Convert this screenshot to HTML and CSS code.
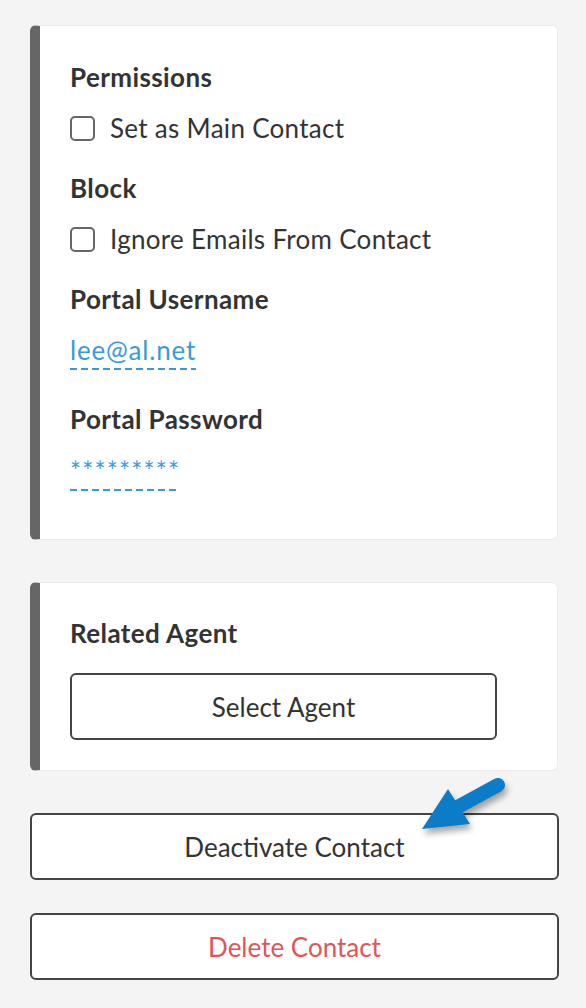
FILE: index.html
```html
<!DOCTYPE html>
<html>
<head>
<meta charset="utf-8">
<link rel="stylesheet" href="styles.css">
</head>
<body>
<div class="page">
  <section class="card card-main">
    <h3 class="label">Permissions</h3>
    <label class="check"><span class="box"></span><span>Set as Main Contact</span></label>
    <h3 class="label label-gap">Block</h3>
    <label class="check"><span class="box"></span><span>Ignore Emails From Contact</span></label>
    <h3 class="label label-gap">Portal Username</h3>
    <div class="field"><span class="editable">lee@al.net</span></div>
    <h3 class="label label-gap2">Portal Password</h3>
    <div class="field field-pw"><span class="editable">*********</span></div>
  </section>

  <section class="card card-agent">
    <h3 class="label">Related Agent</h3>
    <button class="btn btn-agent">Select Agent</button>
  </section>

  <div class="actions">
    <button class="btn btn-wide">Deactivate Contact</button>
    <svg class="pointer" width="100" height="72" viewBox="0 0 100 72">
      <g class="arrow-shape">
        <line x1="88" y1="14" x2="44" y2="38" stroke="#0b7cc7" stroke-width="14" stroke-linecap="round"/>
        <polygon points="12,58 38,18 60,53" fill="#0b7cc7"/>
      </g>
    </svg>
    <button class="btn btn-wide btn-danger">Delete Contact</button>
  </div>
</div>
</body>
</html>
```

FILE: styles.css
```css
html, body {
  margin: 0;
  padding: 0;
  background: #f4f4f4;
}
body {
  font-family: Lato, "Open Sans", sans-serif;
  color: #333;
  width: 586px;
  height: 1008px;
  overflow: hidden;
}
.page {
  padding: 25px 28px 0 30px;
}
.card {
  background: #fff;
  border: 1px solid #ebebeb;
  border-left: 10px solid #666;
  border-radius: 6px;
  padding: 0 30px;
}
.card-main {
  padding-top: 36px;
  padding-bottom: 48px;
}
.card-agent {
  margin-top: 42px;
  padding-top: 35px;
  padding-bottom: 30px;
}
.label {
  margin: 0;
  font-size: 26px;
  line-height: 30px;
  font-weight: 700;
  letter-spacing: 0.4px;
  color: #333;
}
.label-gap { margin-top: 30px; }
.label-gap2 { margin-top: 34px; }
.check {
  display: flex;
  align-items: center;
  gap: 15px;
  margin-top: 21px;
  font-size: 26px;
  line-height: 30px;
  letter-spacing: 0.3px;
}
.box {
  width: 21px;
  height: 21px;
  border: 2px solid #666;
  border-radius: 5px;
  flex: none;
}
.field {
  margin-top: 20px;
  font-size: 26px;
  line-height: 32px;
  color: #3a9ad9;
  letter-spacing: 0.8px;
}
.field-pw {
  margin-top: 21px;
  letter-spacing: 1.2px;
}
.editable {
  display: inline-block;
  padding-bottom: 4px;
  background-image: linear-gradient(to right, #3a9ad9 0 7px, transparent 7px 11px);
  background-size: 11px 2px;
  background-repeat: repeat-x;
  background-position: left bottom;
}
.btn {
  display: block;
  font-family: inherit;
  font-size: 26px;
  color: #333;
  background: #fff;
  border: 2px solid #444;
  border-radius: 6px;
  height: 67px;
  padding: 0;
  cursor: pointer;
}
.btn-agent {
  width: 427px;
  margin-top: 25px;
}
.actions {
  position: relative;
  margin-top: 42px;
}
.btn-wide {
  width: 529px;
}
.btn-danger {
  margin-top: 33px;
  color: #e05656;
}
.pointer {
  position: absolute;
  left: 380px;
  top: -42px;
  filter: drop-shadow(2px 5px 3px rgba(0,0,0,0.35));
}
```
